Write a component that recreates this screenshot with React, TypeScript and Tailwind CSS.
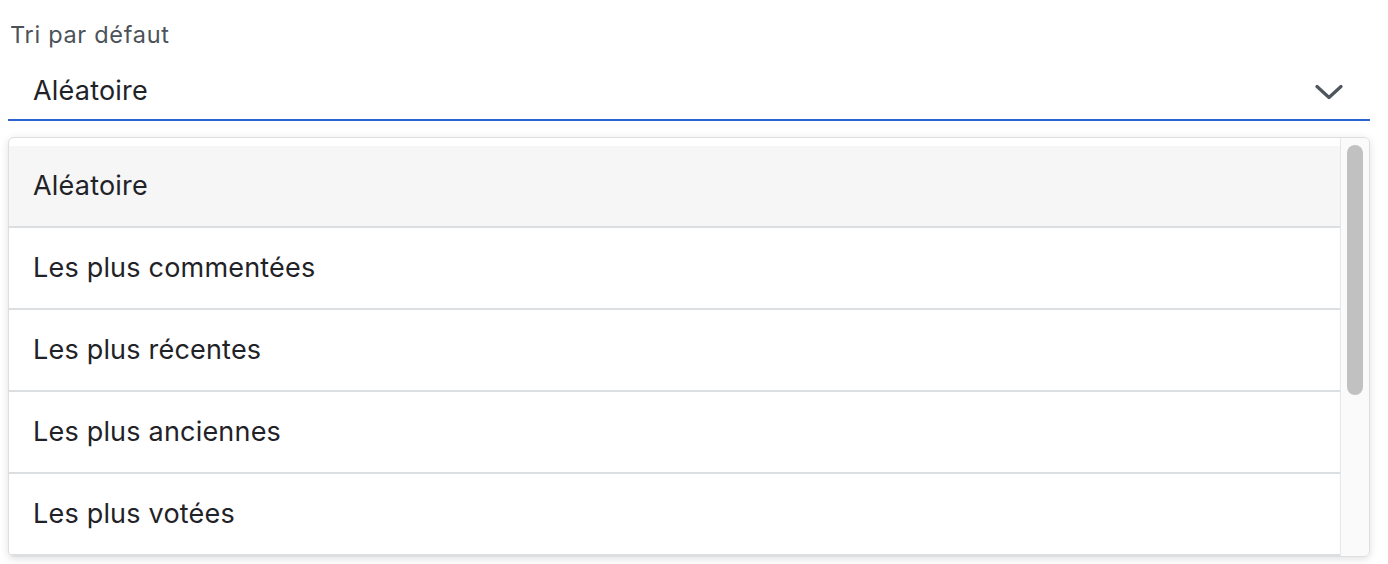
const options = [
    'Aléatoire',
    'Les plus commentées',
    'Les plus récentes',
    'Les plus anciennes',
    'Les plus votées',
]

function Chevron() {
    return (
        <svg width="28" height="16" viewBox="0 0 28 16" fill="none" className="text-[#4e555c]">
            <path d="M2 2.5 L14 13.5 L26 2.5" stroke="currentColor" strokeWidth="3.2" strokeLinecap="round" strokeLinejoin="round" />
        </svg>
    )
}

export default function App() {
    const selected = 'Aléatoire'

    return (
        <div className="h-[564px] w-[1388px] overflow-hidden bg-white pl-2 pr-[18px] font-['Inter',sans-serif]">
            {/* Label */}
            <div className="pt-[21px] pl-[2px] text-[23.5px] leading-[28px] tracking-[0.7px] text-[#4b525a]">Tri par défaut</div>

            {/* Select trigger */}
            <div className="mt-[15px] flex h-[57px] items-center justify-between border-b-2 border-[#2d65d0] pl-[25px] pr-[27px]">
                <span className="text-[27px] tracking-[0.2px] text-[#1f2328]">{selected}</span>
                <Chevron />
            </div>

            {/* Dropdown list */}
            <div className="mt-[16px] flex h-[420px] overflow-hidden rounded-[6px] border border-[#dedede] bg-white shadow-[0_2px_8px_rgba(0,0,0,0.12)]">
                <div className="flex-1 pt-[8px]">
                    {options.map(option => (
                        <div
                            key={option}
                            className={`flex h-[82px] items-center border-b-2 border-[#dcdfe2] pl-[24px] text-[27px] tracking-[0.2px] text-[#1f2328] ${option === selected ? 'bg-[#f6f6f6]' : ''}`}
                        >
                            {option}
                        </div>
                    ))}
                </div>

                {/* Scrollbar */}
                <div className="w-[29px] border-l border-[#e6e6e6] bg-[#fafafa] pt-[7px] pl-[6px]">
                    <div className="h-[250px] w-[16px] rounded-full bg-[#c1c1c1]" />
                </div>
            </div>
        </div>
    )
}
